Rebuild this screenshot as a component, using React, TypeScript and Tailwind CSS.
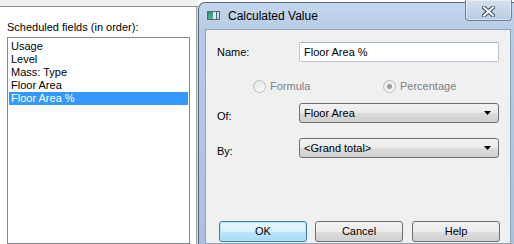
import React from "react";

const font = "font-['Liberation_Sans',Arial,sans-serif]";

function Radio({ checked, label }: { checked?: boolean; label: string }) {
  return (
    <div className="flex items-center gap-[4px]">
      <div className="w-[13px] h-[13px] rounded-full border border-[#bcbcbc] bg-gradient-to-br from-[#e6e6e6] to-[#fbfbfb] flex items-center justify-center">
        {checked && <div className="w-[5px] h-[5px] rounded-full bg-[#9a9a9a]" />}
      </div>
      <span className="text-[#7d7d85] leading-[13px]">{label}</span>
    </div>
  );
}

function Combo({ value }: { value: string }) {
  return (
    <div className="w-[200px] h-[20px] rounded-[3px] border border-[#707070] bg-[linear-gradient(#f2f2f2_0%,#ebebeb_50%,#dddddd_50%,#cfcfcf_100%)] flex items-center pl-[4px] pr-[7px]">
      <span className="flex-1 text-black leading-[13px]">{value}</span>
      <svg width="7" height="4" viewBox="0 0 7 4">
        <path d="M0 0 H7 L3.5 4 Z" fill="#000" />
      </svg>
    </div>
  );
}

function Btn({ label, def }: { label: string; def?: boolean }) {
  return (
    <div
      className={
        "w-[88px] h-[21px] rounded-[3px] border flex items-center justify-center leading-[13px] text-black " +
        (def
          ? "border-[#3c7fb1] bg-[linear-gradient(#eaf6fd_0%,#d9f0fc_50%,#bee6fd_50%,#a7d9f5_100%)] shadow-[inset_0_0_0_1px_#b9e2f8]"
          : "border-[#707070] bg-[linear-gradient(#f2f2f2_0%,#ebebeb_50%,#dddddd_50%,#cfcfcf_100%)]")
      }
    >
      {label}
    </div>
  );
}

export default function App() {
  const items = ["Usage", "Level", "Mass: Type", "Floor Area"];
  return (
    <div className={`w-[514px] h-[244px] overflow-hidden flex bg-white text-[11px] ${font}`}>
      {/* left panel */}
      <div className="w-[198px] shrink-0 flex flex-col">
        <div className="h-[6px] bg-[#f0f0f0]" />
        <div className="h-[1px] bg-[#898c95]" />
        <div className="flex-1 flex min-h-0">
          <div className="w-[197px] bg-white border-r border-[#a0a3aa] flex flex-col">
            <div className="pl-[7px] pt-[14px] leading-[13px] text-black">Scheduled fields (in order):</div>
            <div className="ml-[7px] mt-[3px] w-[183px] flex-1 border border-[#828790] bg-white pt-[2px] px-[1px]">
              {items.map((t) => (
                <div key={t} className="h-[13px] leading-[13px] pl-[2px] text-black">
                  {t}
                </div>
              ))}
              <div className="h-[13px] leading-[13px] pl-[2px] bg-[#3399ff] text-white">Floor Area %</div>
            </div>
          </div>
          <div className="w-[1px] bg-[#dadada]" />
        </div>
      </div>

      {/* dialog */}
      <div className="w-[320px] shrink-0 mt-[2px] rounded-tl-[7px] border-l border-t border-[#56677d] bg-[linear-gradient(#c4d6ec,#b6cbe5_30px,#aac2df)] px-[6px] flex flex-col">
        <div className="h-[26px] flex items-start">
          <div className="mt-[8px] ml-[2px] w-[13px] h-[9px] border border-[#5d6670] flex">
            <div className="w-[5px] h-full bg-[linear-gradient(#2f8f7a,#57b39a)]" />
            <div className="w-[3px] h-full bg-[#dfe7e6]" />
            <div className="w-[1px] h-full bg-[#3d6b8a]" />
            <div className="flex-1 h-full bg-[#cfd8de]" />
          </div>
          <span className="ml-[8px] mt-[6px] text-[12px] leading-[15px] text-black">Calculated Value</span>
          <div className="ml-auto mt-[-3px] w-[47px] h-[21px] rounded-b-[4px] border border-t-0 border-[#6f819a] bg-[linear-gradient(#d3e0ef,#b9cce4)] shadow-[inset_0_0_0_1px_rgba(255,255,255,0.45)] flex items-center justify-center">
            <svg width="13" height="11" viewBox="0 0 13 11" className="mt-[3px]">
              <path d="M2 1.5 L11 9.5 M11 1.5 L2 9.5" stroke="#3c4b5e" strokeWidth="4" strokeLinecap="square" />
              <path d="M2 1.5 L11 9.5 M11 1.5 L2 9.5" stroke="#ffffff" strokeWidth="2" strokeLinecap="square" />
            </svg>
          </div>
        </div>

        <div className="w-[306px] flex-1 border border-[#8ea3bd] bg-[#f0f0f0] flex flex-col text-black">
          <div className="mt-[12px] h-[20px] flex items-center">
            <span className="w-[93px] pl-[11px] leading-[13px]">Name:</span>
            <div className="w-[200px] h-[20px] rounded-[2px] border border-[#b8c6d6] border-t-[#a3b2c4] bg-white flex items-center pl-[4px] leading-[13px]">
              Floor Area %
            </div>
          </div>

          <div className="mt-[18px] h-[13px] flex">
            <div className="ml-[47px] w-[130px]">
              <Radio label="Formula" />
            </div>
            <Radio checked label="Percentage" />
          </div>

          <div className="mt-[10px] h-[20px] flex items-center">
            <span className="w-[93px] pl-[11px] pt-[6px] leading-[13px]">Of:</span>
            <Combo value="Floor Area" />
          </div>

          <div className="mt-[15px] h-[20px] flex items-center">
            <span className="w-[93px] pl-[11px] pt-[6px] leading-[13px]">By:</span>
            <Combo value="<Grand total>" />
          </div>

          <div className="mt-[63px] pl-[13px] flex">
            <Btn label="OK" def />
            <div className="ml-[8px]">
              <Btn label="Cancel" />
            </div>
            <div className="ml-[9px]">
              <Btn label="Help" />
            </div>
          </div>
        </div>
      </div>
    </div>
  );
}
